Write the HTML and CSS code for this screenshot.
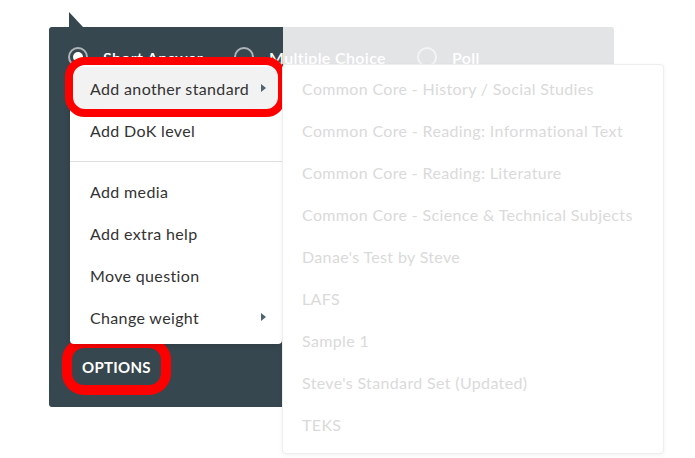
FILE: index.html
```html
<!DOCTYPE html>
<html lang="en">
  <head>
    <meta charset="UTF-8" />
    <meta name="viewport" content="width=device-width, initial-scale=1.0" />
    <title>Question Options</title>
    <link rel="stylesheet" href="styles.css">
  </head>
  <body>
    <div class="stage">
      <div class="question-panel">
        <div class="type-row">
          <label class="type-option type-short">
            <span class="radio checked"></span>
            <span class="type-label">Short Answer</span>
          </label>
          <label class="type-option type-multi">
            <span class="radio"></span>
            <span class="type-label">Multiple Choice</span>
          </label>
          <label class="type-option">
            <span class="radio"></span>
            <span class="type-label">Poll</span>
          </label>
        </div>
        <button class="options-button">OPTIONS</button>
      </div>

      <div class="options-menu">
        <ul class="menu-group">
          <li class="menu-item active">Add another standard <span class="caret"></span></li>
          <li class="menu-item">Add DoK level</li>
        </ul>
        <ul class="menu-group">
          <li class="menu-item">Add media</li>
          <li class="menu-item">Add extra help</li>
          <li class="menu-item">Move question</li>
          <li class="menu-item">Change weight <span class="caret"></span></li>
        </ul>
      </div>

      <ul class="sub-menu">
        <li>Common Core - History / Social Studies</li>
        <li>Common Core - Reading: Informational Text</li>
        <li>Common Core - Reading: Literature</li>
        <li>Common Core - Science &amp; Technical Subjects</li>
        <li>Danae's Test by Steve</li>
        <li>LAFS</li>
        <li>Sample 1</li>
        <li>Steve's Standard Set (Updated)</li>
        <li>TEKS</li>
      </ul>
    </div>
  </body>
</html>
```

FILE: styles.css
```css
body {
  margin: 0;
  background: #ffffff;
  font-family: "Lato", "Open Sans", sans-serif;
  color: #333;
}

.stage {
  position: relative;
  width: 695px;
  height: 458px;
  padding: 27px 0 0 49px;
  box-sizing: border-box;
}

/* dark question card, right side is dimmed */
.question-panel {
  position: relative;
  width: 565px;
  height: 380px;
  box-sizing: border-box;
  padding: 20px 22px 22px 19px;
  border-radius: 3px;
  background: linear-gradient(to right, #37474f 234px, #e3e4e6 234px);
  display: flex;
  flex-direction: column;
  justify-content: space-between;
  align-items: flex-start;
}

.question-panel::before {
  content: "";
  position: absolute;
  left: 20px;
  top: -15px;
  border-bottom: 15px solid #37474f;
  border-right: 14px solid transparent;
}

.type-row {
  display: flex;
  align-items: center;
  height: 20px;
}

.type-option {
  display: flex;
  align-items: center;
  gap: 15px;
  color: #fff;
  font-size: 16px;
  font-weight: 600;
  letter-spacing: 0.35px;
}

.type-short {
  width: 166px;
}

.type-multi {
  width: 183px;
}

.radio {
  width: 20px;
  height: 20px;
  box-sizing: border-box;
  border: 2px solid rgba(255, 255, 255, 0.6);
  border-radius: 50%;
  display: flex;
  align-items: center;
  justify-content: center;
}

.radio.checked::after {
  content: "";
  width: 10px;
  height: 10px;
  border-radius: 50%;
  background: #fff;
}

.options-button {
  margin-left: 4px;
  height: 37px;
  padding: 0 10px;
  border: none;
  border-radius: 12px;
  background: #37474f;
  color: #fff;
  font-family: inherit;
  font-size: 15px;
  font-weight: 700;
  letter-spacing: 0.3px;
  box-shadow: 0 0 0 10px #ff0000;
}

/* dropdown */
.options-menu {
  position: absolute;
  left: 70px;
  top: 62px;
  width: 212px;
  background: #fff;
  border-radius: 4px;
  padding: 5px 0 6px;
  box-shadow: 0 2px 6px rgba(0, 0, 0, 0.15);
}

.menu-group {
  list-style: none;
  margin: 0;
  padding: 0;
}

.menu-group + .menu-group {
  margin-top: 10px;
  border-top: 1px solid #e0e0e0;
  padding-top: 8px;
}

.menu-item {
  position: relative;
  height: 42px;
  display: flex;
  align-items: center;
  padding: 0 16px 0 20px;
  font-size: 16px;
  letter-spacing: 0.35px;
  color: #333;
}

.menu-item.active {
  background: #f2f2f2;
}

.menu-item.active::after {
  content: "";
  position: absolute;
  left: -5px;
  right: -4px;
  top: -10px;
  bottom: -8px;
  border: 8px solid #ff0000;
  border-radius: 20px;
}

.caret {
  margin-left: auto;
  border-left: 5px solid #4f6470;
  border-top: 4.5px solid transparent;
  border-bottom: 4.5px solid transparent;
}

.sub-menu {
  position: absolute;
  left: 282px;
  top: 64px;
  width: 382px;
  margin: 0;
  padding: 2px 0 8px;
  list-style: none;
  background: #fff;
  border: 1px solid #eeeeee;
  border-radius: 4px;
  box-sizing: border-box;
  box-shadow: 0 1px 4px rgba(0, 0, 0, 0.06);
}

.sub-menu li {
  height: 42px;
  display: flex;
  align-items: center;
  padding-left: 19px;
  font-size: 16px;
  letter-spacing: 0.35px;
  color: #dadada;
}
```
